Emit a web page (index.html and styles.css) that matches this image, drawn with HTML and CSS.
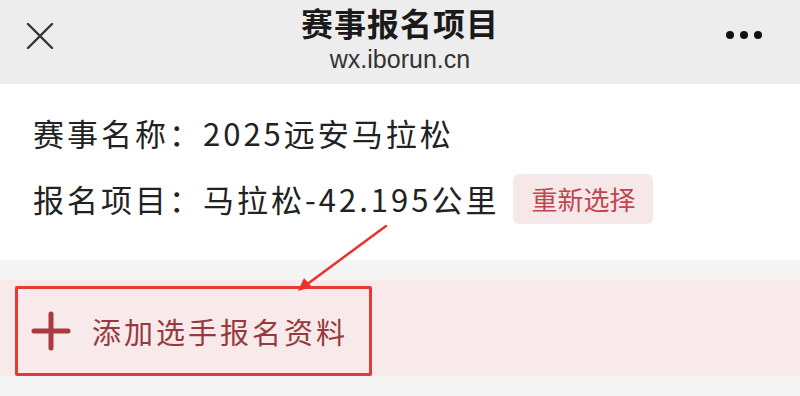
FILE: index.html
```html
<!DOCTYPE html>
<html lang="zh-CN">
<head>
<meta charset="utf-8">
<link rel="stylesheet" href="styles.css">
</head>
<body>
<div class="page">
  <header class="nav">
    <div class="nav-close">
      <svg width="28" height="28" viewBox="0 0 28 28"><path d="M2 2 L26 26 M26 2 L2 26" stroke="#333" stroke-width="2.4" stroke-linecap="round" fill="none"/></svg>
    </div>
    <div class="nav-title">
      <div class="title">赛事报名项目</div>
      <div class="url">wx.iborun.cn</div>
    </div>
    <div class="nav-more">
      <span class="dot"></span><span class="dot"></span><span class="dot"></span>
    </div>
  </header>
  <section class="info">
    <div class="row">赛事名称：2025远安马拉松</div>
    <div class="row">报名项目：马拉松-42.195公里<span class="reselect">重新选择</span></div>
  </section>
  <div class="gap"></div>
  <section class="add-row">
    <div class="add-box">
      <svg class="plus" width="40" height="40" viewBox="0 0 40 40"><path d="M20 3 V37 M3 20 H37" stroke="#a83a40" stroke-width="5" stroke-linecap="round" fill="none"/></svg>
      <span class="add-text">添加选手报名资料</span>
    </div>
  </section>
  <div class="bottom"></div>
  <svg class="arrow" width="800" height="396" viewBox="0 0 800 396">
    <path d="M386 226 L302 288" stroke="#e8322c" stroke-width="2.5" fill="none" stroke-linecap="round"/>
    <path d="M298 291 L304 278 L312 287 Z" fill="#e8322c"/>
  </svg>
</div>
</body>
</html>
```
FILE: styles.css
```css
* { box-sizing: border-box; }
html, body { margin: 0; padding: 0; }
body {
  width: 800px;
  height: 396px;
  overflow: hidden;
  font-family: "Noto Sans CJK SC", "Noto Sans", sans-serif;
  background: #f5f5f5;
}
.page { position: relative; width: 800px; height: 396px; }
.nav {
  height: 84px;
  background: #ededed;
  display: flex;
  align-items: flex-start;
  justify-content: space-between;
}
.nav-close { width: 100px; padding: 22px 0 0 26px; }
.nav-close svg { display: block; }
.nav-title {
  flex: 1;
  display: flex;
  flex-direction: column;
  align-items: center;
  padding-top: 2px;
}
.title {
  font-size: 32px;
  line-height: 40px;
  font-weight: 700;
  color: #1a1a1a;
  letter-spacing: 1px;
}
.url {
  font-family: "Liberation Sans", Arial, sans-serif;
  font-size: 25px;
  line-height: 28px;
  color: #333;
  margin-top: 3px;
}
.nav-more {
  width: 100px;
  display: flex;
  justify-content: flex-end;
  gap: 6px;
  padding: 31px 38px 0 0;
}
.dot { width: 8px; height: 8px; border-radius: 50%; background: #111; }
.info {
  background: #fff;
  height: 176px;
  padding: 16px 0 0 33px;
}
.row {
  display: flex;
  align-items: center;
  font-size: 31px;
  line-height: 66px;
  height: 66px;
  color: #222;
  letter-spacing: 3px;
}
.reselect {
  margin-left: 14px;
  background: #f6e8e9;
  color: #c0474f;
  font-size: 26px;
  line-height: 50px;
  height: 50px;
  padding: 0 18px;
  letter-spacing: 0;
  border-radius: 6px;
}
.gap { height: 20px; background: #f5f5f5; }
.add-row {
  height: 96px;
  background: #f8e9ea;
  padding: 6px 0 0 15px;
}
.add-box {
  width: 357px;
  height: 90px;
  border: 3px solid #e53a33;
  border-radius: 2px;
  display: flex;
  align-items: center;
  padding-left: 13px;
}
.plus { display: block; }
.add-text {
  margin-left: 21px;
  font-size: 29px;
  color: #963a40;
  letter-spacing: 3px;
}
.bottom { height: 20px; background: #f5f5f5; }
.arrow { position: absolute; left: 0; top: 0; pointer-events: none; }
```
